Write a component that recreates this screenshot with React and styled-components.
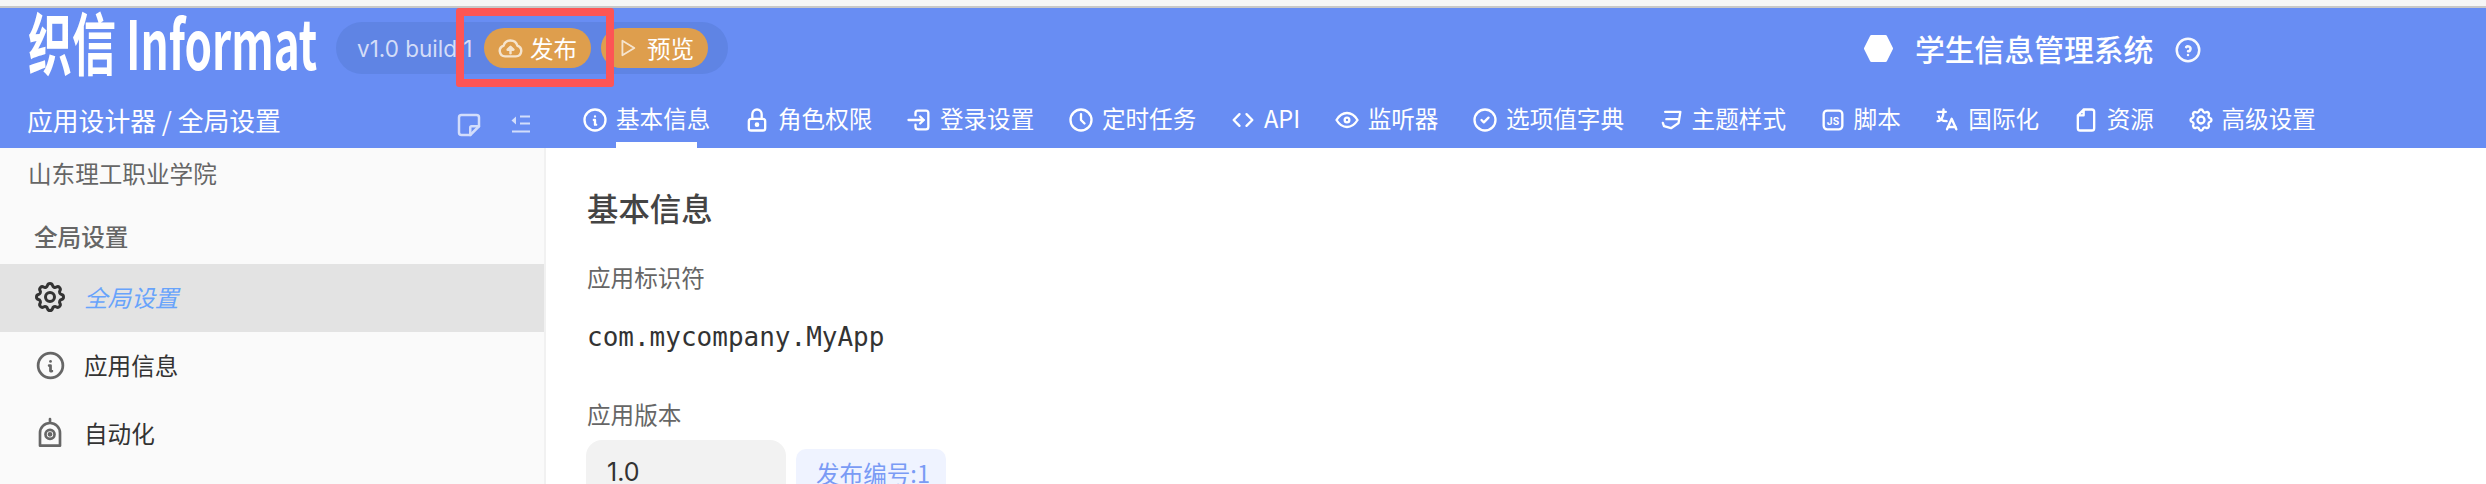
import React from "react";
import styled, { createGlobalStyle } from "styled-components";
import {
  TbPlayerPlay, TbHelpCircle, TbNote, TbInfoCircle, TbLock, TbLogin2, TbClock, TbEye, TbCircleCheck,
  TbLanguage, TbSettings,
} from "react-icons/tb";

const Global = createGlobalStyle`
  html, body { margin: 0; padding: 0; height: 100%; overflow: hidden; background: #fff; }
  body { font-family: Inter, "Noto Sans CJK SC", sans-serif; }
  * { box-sizing: border-box; }
`;
const Page = styled.div`width: 2486px; height: 484px; overflow: hidden; position: relative; display: flex; flex-direction: column;`;
const Chrome = styled.div`height: 8px; flex: none; background: #f6f6f6; border-bottom: 2px solid #c8c8c8;`;
const Header = styled.header`height: 140px; flex: none; background: #688df3; color: #fff; display: flex; flex-direction: column;`;
const TopRow = styled.div`height: 80px; display: flex; align-items: flex-start;`;
const Logo = styled.div`
  width: 336px; flex: none; padding-left: 28px; margin-top: -1px; font: 700 68px/68px "Noto Sans CJK SC", sans-serif; white-space: nowrap;
  span { display: inline-block; transform: scaleX(.647); transform-origin: left center; }
`;
const VersionPill = styled.div`
  margin-top: 14px; width: 392px; height: 52px; flex: none; border-radius: 26px; background: #5f84e4;
  display: flex; align-items: center; padding-left: 21px;
`;
const Version = styled.span`width: 127px; flex: none; font-size: 22.5px; color: #d4ddf8; white-space: nowrap;`;
const PillButton = styled.button`
  width: 107px; height: 40px; flex: none; border: 0; border-radius: 20px; background: #de9e4d; color: #fff; margin-right: 10px;
  display: flex; align-items: center; padding: 0 0 0 ${p => p.$pad}px; gap: ${p => p.$gap}px;
  font: 400 23.6px "Noto Sans CJK SC", sans-serif; white-space: nowrap;
  svg { opacity: .72; flex: none; }
`;
const AppTitle = styled.div`
  margin: 16px 0 0 1136px; display: flex; align-items: center; flex: none;
  height: 48px; font: 500 29.8px "Noto Sans CJK SC", sans-serif; white-space: nowrap;
`;
const Hex = styled.svg`width: 29px; height: 27px; margin-right: 22px; flex: none;`;
const Help = styled.span`display: flex; margin-left: 20px; margin-top: 4px; opacity: .95;`;
const BottomRow = styled.div`height: 60px; display: flex; align-items: flex-start;`;
const Crumb = styled.div`
  width: 454px; flex: none; padding-left: 27px; margin-top: 12px; height: 40px;
  font: 400 25.8px/40px "Noto Sans CJK SC", sans-serif; white-space: nowrap;
`;
const ToolIcons = styled.div`width: 127px; flex: none; margin-top: 22px; display: flex; gap: 27px; svg { opacity: .7; flex: none; }`;
const IndentIcon = styled.svg`width: 20px; height: 20px; margin-top: 5px;`;
const Tabs = styled.nav`display: flex; gap: 32.6px; height: 60px;`;
const Tab = styled.a`
  display: flex; position: relative; align-items: flex-start; padding-top: 10px; height: 60px; gap: 7px;
  font: 400 23.6px/40px "Noto Sans CJK SC", sans-serif; white-space: nowrap; color: #fff;
  svg { flex: none; margin-top: 8px; width: 28px; height: 28px; }
  ${p => p.$active && `&::after { content: ""; position: absolute; left: 35px; width: 81px; bottom: 0; height: 6px; background: #fff; }`}
`;
const Body = styled.div`flex: 1; display: flex; min-height: 0;`;
const Sidebar = styled.aside`width: 546px; flex: none; background: #fafafa; border-right: 2px solid #f1f1f1; color: #666;`;
const Org = styled.div`height: 54px; padding: 5px 0 0 28px; font: 400 23.6px/40px "Noto Sans CJK SC", sans-serif;`;
const GroupTitle = styled.div`height: 62px; padding: 14px 0 0 34px; font: 500 23.6px/40px "Noto Sans CJK SC", sans-serif;`;
const NavRow = styled.div`
  height: 68px; display: flex; align-items: center; padding: 0 0 2px 32px; gap: 16px;
  background: ${p => (p.$active ? "#e3e3e3" : "transparent")};
  color: ${p => (p.$active ? "#68a3fb" : "#333")};
  font: ${p => (p.$active ? "italic" : "normal")} 400 23.6px "Noto Sans CJK SC", sans-serif;
`;
const NavIcon = styled.span`
  width: 36px; height: 36px; flex: none; display: flex; align-items: center; justify-content: center;
  color: ${p => p.$color};
`;
const Main = styled.main`flex: 1; padding: 0 0 0 41px; color: #666; overflow: hidden;`;
const Heading = styled.h2`margin: 37px 0 0; font: 500 31.4px/46px "Noto Sans CJK SC", sans-serif; color: #444;`;
const Label = styled.div`font: 400 23.6px/36px "Noto Sans CJK SC", sans-serif; margin-top: ${p => p.$top}px;`;
const Mono = styled.div`font: 400 26px/40px "DejaVu Sans Mono", monospace; color: #333; margin-top: 22px;`;
const VersionRow = styled.div`display: flex; margin-top: 8px; gap: 10px; align-items: flex-start; margin-left: -1px;`;
const VersionInput = styled.div`width: 200px; height: 80px; border-radius: 16px; background: #f2f2f2; padding: 12px 0 0 21px; font: 400 25px/40px Inter, sans-serif; color: #333;`;
const Tag = styled.div`margin-top: 9px; width: 150px; height: 60px; border-radius: 10px; background: #eff3ff; color: #7a9bf5; padding: 4px 0 0 20px; font: 400 23.6px/40px "Noto Sans CJK SC", sans-serif; white-space: nowrap;`;
const Callout = styled.div`position: absolute; left: 456px; top: 8px; width: 158px; height: 79px; border: 8px solid #fd5555; border-radius: 3px;`;

const Line = ({ children, size = 28, ...rest }) => (
  <svg viewBox="0 0 24 24" width={size} height={size} fill="none" stroke="currentColor" strokeWidth="2" strokeLinecap="round" strokeLinejoin="round" {...rest}>
    {children}
  </svg>
);
const ChevronPair = () => <Line><path d="M9 7l-5 5l5 5M15 7l5 5l-5 5" /></Line>;
const CssGlyph = () => <Line><path d="M7 5H20L18.5 14.5L12 19L6 17.2L5 14.5M8 11.3H18" /></Line>;
const JsGlyph = () => (
  <Line>
    <rect x="4" y="4" width="16" height="16" rx="3" />
    <text x="12" y="16.5" textAnchor="middle" fontFamily="Inter, sans-serif" fontSize="8.5" fontWeight="700" fill="currentColor" stroke="none">JS</text>
  </Line>
);
const FileGlyph = () => <Line><path d="M10 3H17a2 2 0 0 1 2 2V19a2 2 0 0 1-2 2H7a2 2 0 0 1-2-2V8ZM10 3V8H5" /></Line>;
const CloudGlyph = () => (
  <Line size={29}>
    <path d="M7.5 18.5a4.5 4.5 0 0 1-1.2-8.8a5.9 5.9 0 0 1 11.4 0a4.5 4.5 0 0 1-1.2 8.8Z" />
    <path d="M12 16v-4.5" /><path d="M9.6 13L12 10.6L14.4 13Z" fill="currentColor" />
  </Line>
);
const DomeGlyph = () => (
  <Line size={32} stroke="currentColor">
    <path d="M4.5 21.5V12a7.5 7.5 0 0 1 15 0v9.5ZM12 1.5V4.5" />
    <circle cx="12" cy="13" r="3.4" /><circle cx="12" cy="13" r=".8" fill="currentColor" />
  </Line>
);

const tabs = [
  [TbInfoCircle, "基本信息", true], [TbLock, "角色权限"], [TbLogin2, "登录设置"], [TbClock, "定时任务"],
  [ChevronPair, "API"], [TbEye, "监听器"], [TbCircleCheck, "选项值字典"], [CssGlyph, "主题样式"],
  [JsGlyph, "脚本"], [TbLanguage, "国际化"], [FileGlyph, "资源"], [TbSettings, "高级设置"],
];

export default function App() {
  return (
    <Page>
      <Global />
      <Chrome />
      <Header>
        <TopRow>
          <Logo><span>织信 Informat</span></Logo>
          <VersionPill>
            <Version>v1.0 build 1</Version>
            <PillButton $pad={12} $gap={5}><CloudGlyph />发布</PillButton>
            <PillButton $pad={15} $gap={9}><TbPlayerPlay size={22} />预览</PillButton>
          </VersionPill>
          <AppTitle>
            <Hex viewBox="0 0 29 27"><path d="M7.5 1.5H21.5L27.5 13.5L21.5 25.5H7.5L1.5 13.5Z" fill="#fff" stroke="#fff" strokeWidth="3" strokeLinejoin="round" /></Hex>
            学生信息管理系统
            <Help><TbHelpCircle size={30} /></Help>
          </AppTitle>
        </TopRow>
        <BottomRow>
          <Crumb>应用设计器 / 全局设置</Crumb>
          <ToolIcons>
            <TbNote size={30} />
            <IndentIcon viewBox="0 0 20 20">
              <path d="M5 1.5L.5 5.5L5 9.5Z" fill="#fff" />
              <path d="M9 1.5H19M9 8.5H19M1 16.5H19" stroke="#fff" strokeWidth="2" fill="none" />
            </IndentIcon>
          </ToolIcons>
          <Tabs>
            {tabs.map(([Icon, label, active]) => (
              <Tab key={label} $active={active}><Icon />{label}</Tab>
            ))}
          </Tabs>
        </BottomRow>
      </Header>
      <Body>
        <Sidebar>
          <Org>山东理工职业学院</Org>
          <GroupTitle>全局设置</GroupTitle>
          <NavRow $active><NavIcon $color="#333"><TbSettings size={36} /></NavIcon>全局设置</NavRow>
          <NavRow><NavIcon $color="#666"><TbInfoCircle size={33} /></NavIcon>应用信息</NavRow>
          <NavRow><NavIcon $color="#666"><DomeGlyph /></NavIcon>自动化</NavRow>
        </Sidebar>
        <Main>
          <Heading>基本信息</Heading>
          <Label $top={28}>应用标识符</Label>
          <Mono>com.mycompany.MyApp</Mono>
          <Label $top={39}>应用版本</Label>
          <VersionRow>
            <VersionInput>1.0</VersionInput>
            <Tag>发布编号:1</Tag>
          </VersionRow>
        </Main>
      </Body>
      <Callout />
    </Page>
  );
}
